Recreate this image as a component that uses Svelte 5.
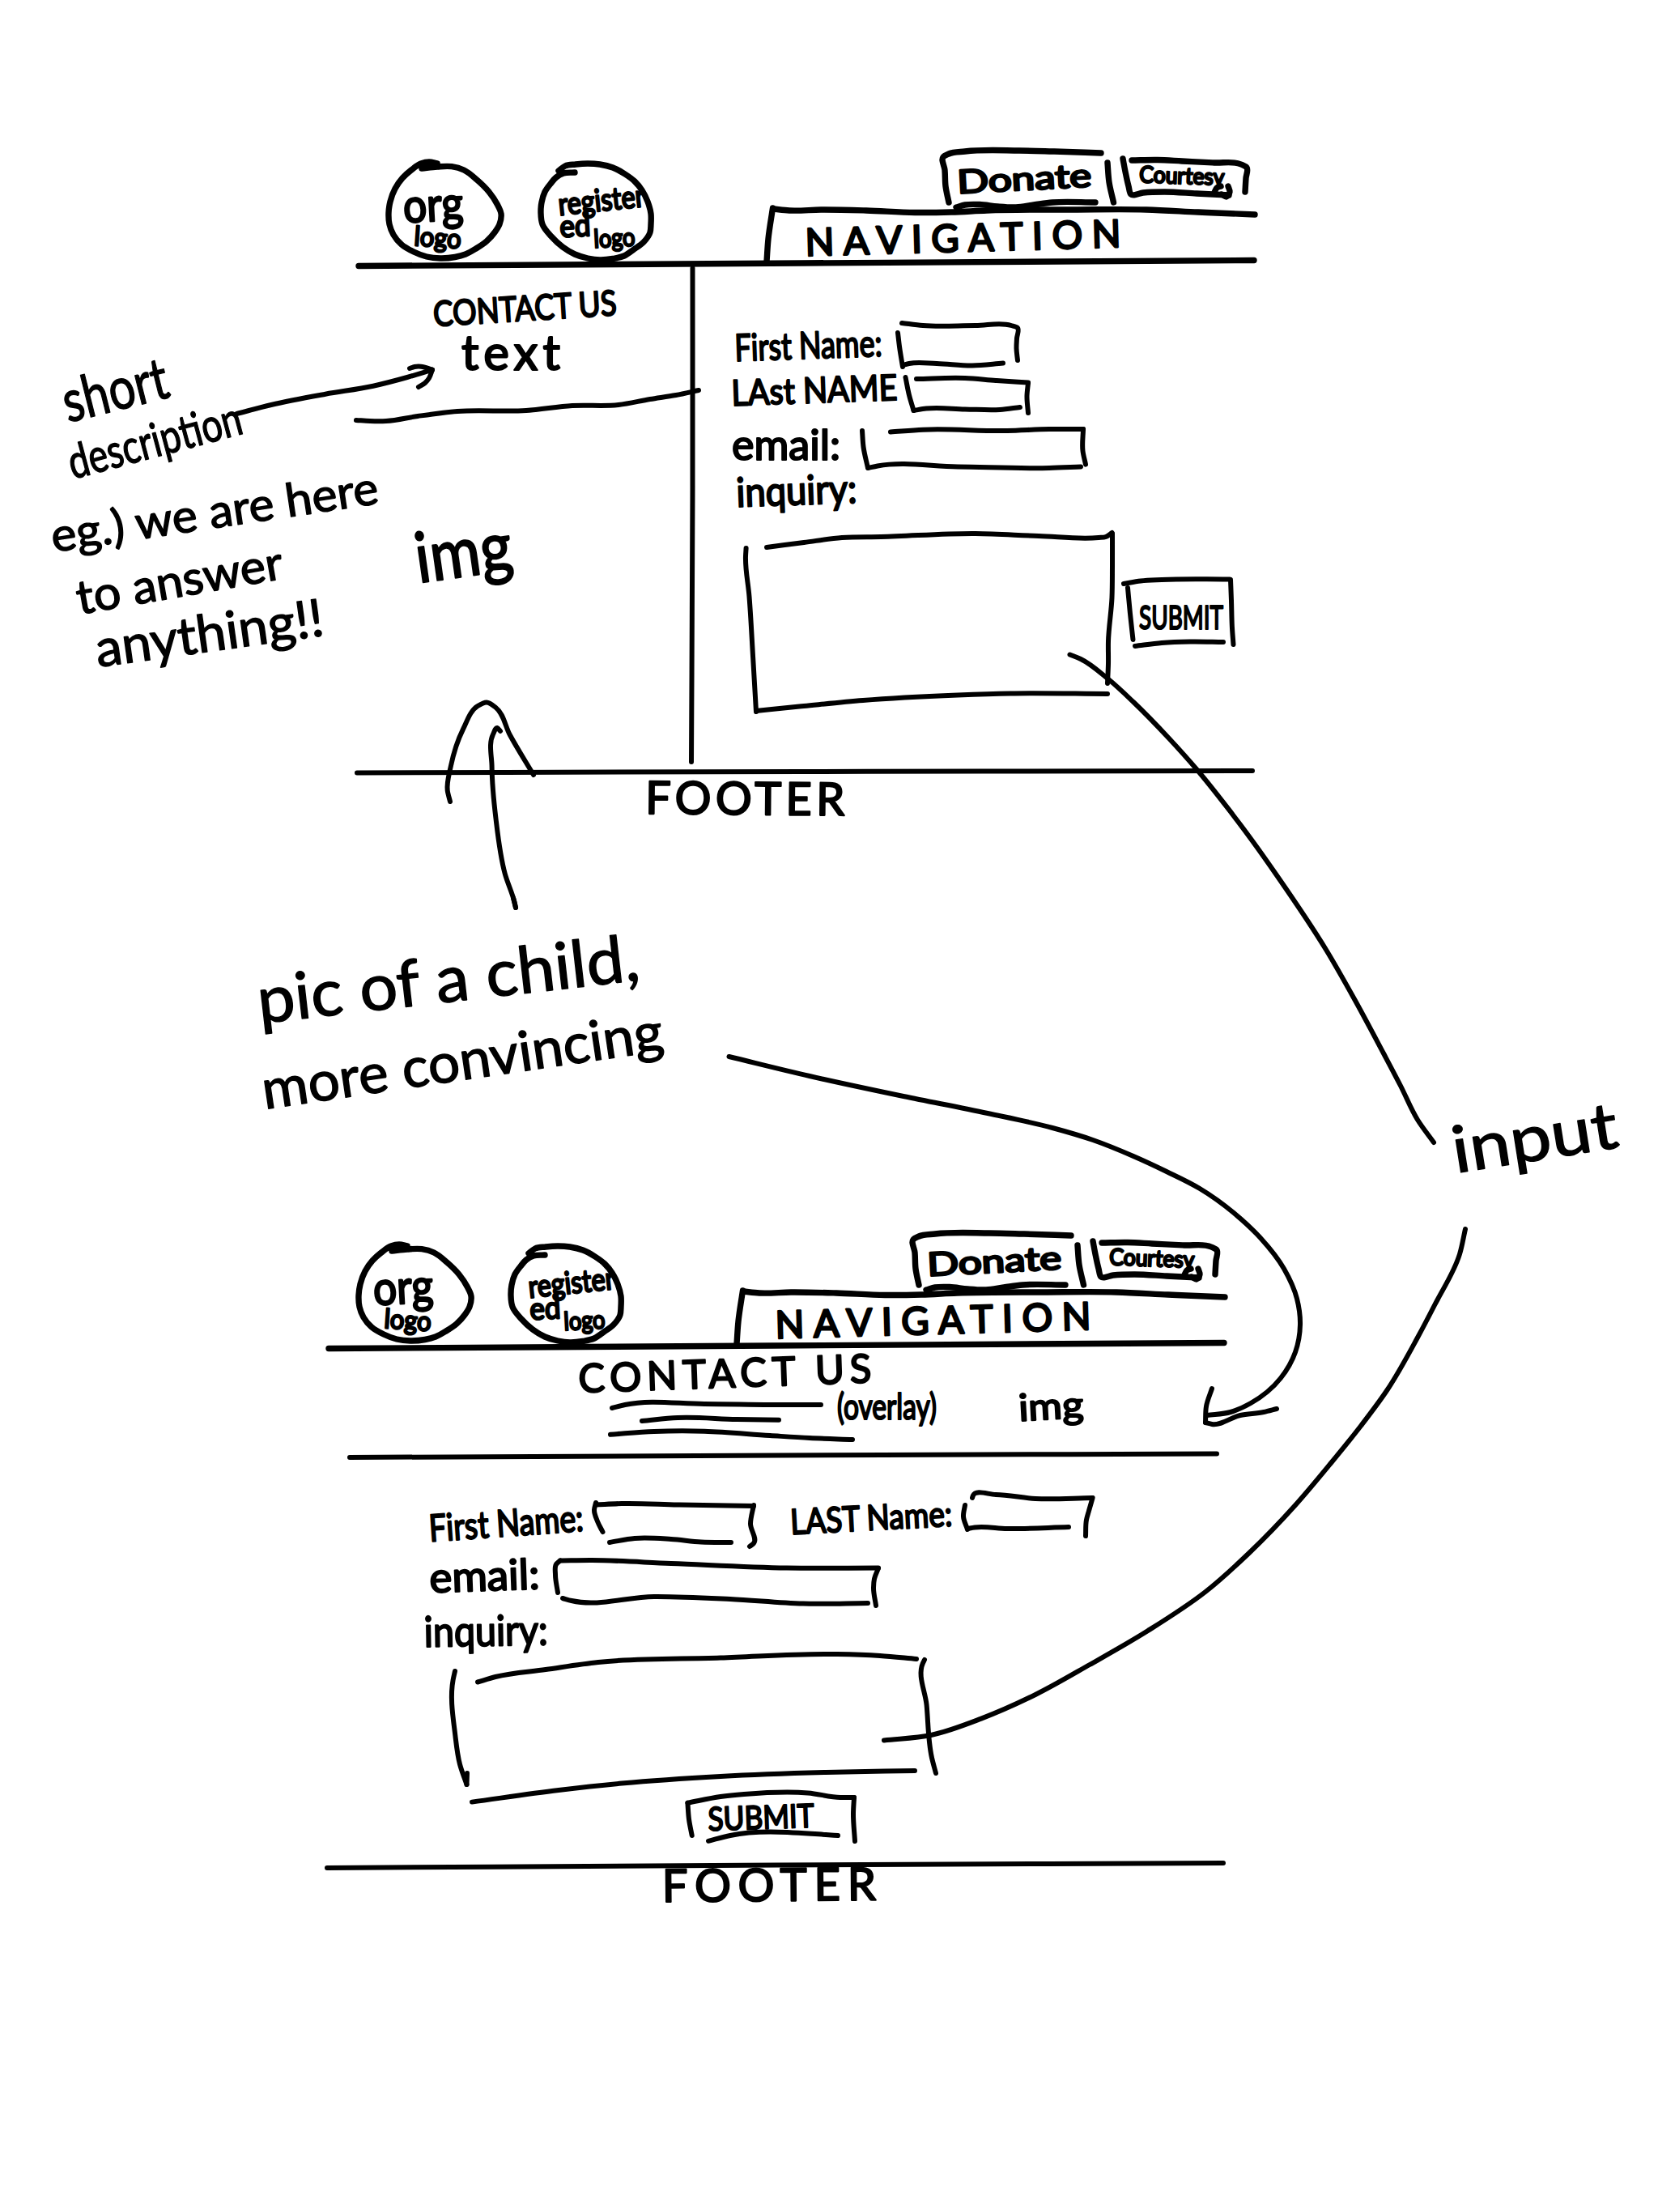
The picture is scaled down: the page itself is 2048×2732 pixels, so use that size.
<script>
  // Smooth pen stroke through a list of "x,y" points; tangents scale with
  // each segment's length so unevenly spaced points still bend softly.
  function pen(points) {
    const p = points.split(' ').map((s) => s.split(',').map(Number));
    const dist = (a, b) => Math.hypot(b[0] - a[0], b[1] - a[1]) || 1;
    const last = p.length - 1;
    const dir = p.map((b, i) => {
      const a = p[i - 1];
      const c = p[i + 1];
      if (!a) return [(c[0] - b[0]) / dist(b, c), (c[1] - b[1]) / dist(b, c)];
      if (i === last) return [(b[0] - a[0]) / dist(a, b), (b[1] - a[1]) / dist(a, b)];
      const l = dist(a, b);
      const r = dist(b, c);
      const x = ((b[0] - a[0]) / l) * r + ((c[0] - b[0]) / r) * l;
      const y = ((b[1] - a[1]) / l) * r + ((c[1] - b[1]) / r) * l;
      return [x / (l + r), y / (l + r)];
    });
    let d = `M${p[0][0]} ${p[0][1]}`;
    for (let i = 0; i < last; i++) {
      const b = p[i];
      const c = p[i + 1];
      const k = dist(b, c) / 3;
      d += `C${b[0] + dir[i][0] * k} ${b[1] + dir[i][1] * k} ${c[0] - dir[i + 1][0] * k} ${c[1] - dir[i + 1][1] * k} ${c[0]} ${c[1]}`;
    }
    return d;
  }
  const word = (t, x, y, w, size, rot = 0) => ({ t, x, y, w, size, rot, adjust: 'spacingAndGlyphs' });
  // Same as word(), but reaches its width by letter spacing alone.
  const spaced = (t, x, y, w, size, rot = 0) => ({ t, x, y, w, size, rot, adjust: 'spacing' });

  const orgLogo = [
    '521,208 540,206 558,205.7 573,210 589,222 604,237 614,252 619,264 617,277 611,287 601,298 588,307 575,314 562,317.5 544,319 527,317 511,311 496,302 486,290 481,277 480,263 482,249 488,233 497,220 508,210 520,202 530,200 540,202',
    '524,206 532,203 540,204'
  ];
  const regLogo = [
    '690,211 698,205 711,203 726,202 741,203 757,207 772,215 784,224 793,235 800,249 804,264 804,277 803,287 795,299 783,308 771,316 757,319.5 741,321 726,319 710,314 695,305 681,292 670,277 668,263 669,250 673,237 680,227 687,219 696,214 710,213'
  ];
</script>

{#snippet sketch(box, strokes, words = [], kind = '')}
  {@const b = box.split(' ')}
  <svg class="sketch {kind}" viewBox={box} width={b[2]} height={b[3]}>
    {#each strokes as s}<path d={pen(s)} />{/each}
    {#each words as w}
      <text x={w.x} y={w.y} textLength={w.w} lengthAdjust={w.adjust} font-size={w.size} transform="rotate({w.rot} {w.x} {w.y})">{w.t}</text>
    {/each}
  </svg>
{/snippet}

{#snippet siteHeader()}
  <header>
    <div class="bar">
      {@render sketch('474 180 150 140', orgLogo, [word('org', 499, 275, 74, 58, -3), word('logo', 511, 303, 58, 33, 4)], 'bold')}
      {@render sketch('660 180 150 140', regLogo, [word('register', 691, 266, 107, 38, -6), word('ed', 692, 293, 38, 38, -3), word('logo', 734, 306, 51, 31, -3)], 'bold')}
      <div class="tools">
        <div class="actions">
          {@render sketch('1160 180 220 72', ['1172,250 1168,230 1167,210 1165,194 1172,190 1192,187 1259,186 1300,187 1360,189', '1368,201 1370,225 1375.5,250', '1181,256 1192,253 1210,252.5 1232,255 1255,256 1277,253 1300,250 1353,250'], [word('Donate', 1183, 239, 166, 40, -3)], 'bold')}
          {@render sketch('1380 180 172 72', ['1387,196 1390,212 1394,230 1397,240 1412,238 1438,237 1478,239 1518,241', '1398,198 1430,197.5 1460,199 1500,201 1533,203 1540,207 1539,220 1538,237', '1500,238 1503,232 1508,230', '1509,240 1515,243 1519,237 1517,230'], [word('Courtesy', 1407, 225, 105, 28, 2)], 'bold')}
        </div>
        <nav>
          {@render sketch('940 252 612 68', ['947,323 949,295 954.5,257', '955,258 975,260 1014,259 1070,260 1130,262.5 1175,262 1219,260 1326,259 1416,259 1480,262 1550,265'], [spaced('NAVIGATION', 995, 316, 390, 47, -1.6)], 'bold')}
        </nav>
      </div>
    </div>
    {@render sketch('438 320 1114 14', ['443,328.5 990,325 1549,321.5'], [], 'bold')}
  </header>
{/snippet}

<div class="page">
  <section class="frame split">
    {@render siteHeader()}
    <main>
      <aside>
        {@render sketch('438 334 412 80', [], [word('CONTACT US', 536, 403, 227, 43, -3.5)])}
        {@render sketch('438 414 412 60', [], [spaced('text', 570, 457, 122, 60)])}
        {@render sketch('438 474 412 56', ['440,519 457,520 477,520 516,514 565,508 650,507 707,501 764,500 803,493 835,488 863,482'])}
        {@render sketch('438 530 412 170', [], [word('img', 517, 720, 120, 86, -8)])}
      </aside>
      {@render sketch('850 334 12 610', ['855.5,331 855.5,600 854,941'])}
      <form>
        <div class="row">
          {@render sketch('900 392 200 66', [], [word('First Name:', 908, 446, 182, 46, -2)])}
          {@render sketch('1100 392 170 66', ['1114,399 1140,402 1205,402 1249,402 1257,405 1256,418 1255.5,430 1257,445', '1109,411 1111,428 1115,453', '1115,451 1123,449 1157,449 1201,451.5 1239,448.6'])}
        </div>
        <div class="row">
          {@render sketch('900 458 210 62', [], [word('LAst NAME', 904, 501, 205, 44, -2)])}
          {@render sketch('1110 458 170 62', ['1118.5,466 1123,488 1128.5,507', '1128.5,507 1144,504.6 1192,505.4 1235,506 1260,503', '1132,468 1192,467 1230,470 1270,472.6', '1270,473 1268.5,489 1270,510'])}
        </div>
        <div class="row">
          {@render sketch('900 520 160 64', [], [word('email:', 904, 568, 134, 52)])}
          {@render sketch('1060 520 290 64', ['1065,532 1066.5,552 1072,578', '1072,578 1084,575.5 1183,576.5 1296,578 1335,576.5', '1100,533.6 1140,530.7 1244,532 1296,530 1338,530', '1338,530 1337.5,557 1341,573.6'])}
        </div>
        {@render sketch('900 584 200 66', [], [word('inquiry:', 910, 626, 149, 50, -2)])}
        <div class="row">
          {@render sketch('900 650 480 240', ['947,676 993,670 1040,664 1088,663 1205,659 1283,662 1357,664 1366,663 1373.5,658', '921.6,677 921,687 925.5,737 930,810 934,879', '1374,659 1374,700 1373.5,738 1369,792 1369,820 1368,844', '934,878 993,872 1066,865 1183,858.5 1248,856.4 1368,857'])}
          {@render sketch('1380 650 150 240', ['1388,721 1409,717.5 1435,716 1519,715.4', '1520,716 1521,742 1522,776 1523.5,796', '1393,726 1396,758 1399.5,790', '1402,798 1435,794 1470,792.5 1511,793'], [word('SUBMIT', 1407, 777, 104, 41)])}
        </div>
      </form>
    </main>
    <footer>
      {@render sketch('438 944 1114 76', ['441,954.5 990,953 1547,952'], [spaced('FOOTER', 797, 1005, 246, 56, 0.5)])}
    </footer>
  </section>

  <section class="frame stacked">
    {@render siteHeader()}
    <div class="hero">
      {@render sketch('700 1671 380 54', [], [spaced('CONTACT US', 715, 1720, 362, 49, -2)])}
      <div class="row">
        {@render sketch('700 1725 326 65', ['756,1739 772,1735 870,1734 951,1735 1014,1735', '793,1755 837,1751 910,1753 962,1753.7', '754,1771.7 808,1768 870,1767.7 951,1773 1000,1776 1053,1778'])}
        {@render sketch('1026 1725 144 65', [], [word('(overlay)', 1034, 1753, 123, 44)])}
        <div class="picture">
          {@render sketch('1250 1725 100 65', [], [word('img', 1259, 1755, 80, 46, -3)])}
        </div>
      </div>
      {@render sketch('400 1790 1114 20', ['432,1800 960,1797.5 1503,1795.5'])}
      {@render sketch('400 1810 1114 0', ['1193,1802.5 1206,1801.5 1226,1802', '1340,1804.4 1341,1804.6'], [], 'faint')}
    </div>
    <form>
      <div class="row">
        {@render sketch('520 1844 210 70', [], [word('First Name:', 531, 1904, 191, 46, -4)])}
        {@render sketch('730 1844 210 70', ['736,1856 734,1865 738,1879 744.5,1892', '736,1858.5 768,1857 837,1858.5 931,1860', '931,1859 927,1882 931,1906 926,1910', '753,1905 784,1900 829,1901 866,1904.5 903,1905'])}
        <div class="next">
          {@render sketch('970 1844 215 70', [], [word('LAST Name:', 977, 1895, 200, 43, -3)])}
        </div>
        {@render sketch('1185 1844 170 70', ['1192,1859 1190,1873 1195,1889', '1195,1888 1204,1886.5 1244,1888 1320,1886', '1201,1850 1202,1847 1230,1846 1279,1851 1349,1850', '1349.6,1850 1345,1866 1342,1877 1341,1897'])}
      </div>
      <div class="row">
        {@render sketch('520 1914 165 76', [], [word('email:', 531, 1967, 136, 52, -2)])}
        {@render sketch('685 1914 410 76', ['692,1927.4 687,1932 686,1945 689,1967', '692,1927.4 731,1927 829,1931 972,1936.6 1085,1936.6', '1085,1937 1080,1950 1079,1961 1082,1983', '695,1974 706,1977 808,1972 902,1975 992,1980.6 1072,1980'])}
      </div>
      {@render sketch('520 1990 165 46', [], [word('inquiry:', 524, 2034, 153, 52, -1)])}
      {@render sketch('520 2036 640 176', ['590,2077.5 612,2071 674,2062 739,2053 890,2047.6 1034,2043 1087,2045 1132,2049', '562,2064 559.6,2075 562.4,2144 568,2179 576.5,2204', '576.5,2204 577,2190', '1142,2050 1140,2054 1144.6,2106 1151,2171 1156,2190', '583,2225.6 690,2211 768,2202.6 890,2194 1020,2189 1130,2187'])}
      <div class="submit">
        {@render sketch('845 2212 215 68', ['849.4,2226.7 890,2219 919,2216 998,2214.5 1038,2220 1055,2220', '849.4,2226.7 851,2247 854.7,2267', '1055,2220 1054,2240 1056,2274', '875,2273.8 902,2267 1020,2266 1035,2267'], [word('SUBMIT', 875, 2261, 131, 40, -2)])}
      </div>
    </form>
    <footer>
      {@render sketch('400 2280 1114 80', ['404,2307 960,2303.5 1511,2301'], [spaced('FOOTER', 818, 2349, 264, 56, -0.5)])}
    </footer>
  </section>

  <!-- Free-hand notes and arrows laid over both frames -->
  <div class="notes">
    {@render sketch(
      '0 0 2048 2732',
      [
        '292.5,511 335,500 402,486.7 461,476.7 503,466 534,456.7',
        '506,455 512,453 520,452.7 534,456.7',
        '534,456.7 530,467 525,473 517,478',
        '556,990 552.7,976 556.7,947 572,900.7 590,872 601,867.5 612.5,874 630,908 659,957',
        '618,903 614,899 609,907 607.6,947 612.5,1011 623.7,1079 635.7,1115 637,1121',
        '634,1109 637,1121',
        '900.5,1305 1000,1329 1116,1354 1220,1375 1300,1393 1350,1408 1400,1428 1441,1447 1482,1468 1524,1498 1557,1529 1586,1567 1602,1604 1606,1636 1600,1670 1582,1702 1545,1733 1520,1744 1491,1748',
        '1497,1715 1490,1737 1489,1757',
        '1489,1757 1497,1759 1532,1748 1561,1744 1577,1740',
        '1321.5,808.5 1335,814 1369,838.8 1400,867 1444,912 1478,950 1517,998.7 1548,1040 1577,1081 1638,1173 1673,1234 1709,1301 1730,1341 1751,1383 1771,1411',
        '1810,1518 1803,1549 1772,1612 1751,1652 1714,1716 1681,1761 1644,1807 1600,1859 1543,1918 1489,1966 1418,2014 1346,2056 1279,2093 1212,2122.6 1150,2143 1092,2149.4'
      ],
      [
        word('short', 84, 522, 132, 72, -14),
        word('description', 90, 592, 220, 58, -15),
        word('eg.) we are here', 66, 682, 408, 57, -8.5),
        word('to answer', 98, 759, 258, 58, -10),
        word('anything!!', 121, 824, 284, 64, -8),
        word('pic of a child,', 321, 1264, 474, 80, -6.5),
        word('more convincing', 327, 1370, 500, 68, -8.4),
        word('input', 1798, 1449, 206, 80, -9)
      ]
    )}
  </div>
</div>

<style>
  :global(body) {
    background: #fff;
  }
  .page {
    position: relative;
    display: flex;
    flex-direction: column;
    width: 2048px;
    height: 2732px;
    background: #fff;
    overflow: hidden;
  }
  .frame {
    display: flex;
    flex-direction: column;
    width: 1114px;
  }
  .split {
    margin: 180px 0 0 438px;
  }
  .stacked {
    margin: 497px 0 0 400px;
  }
  .stacked header {
    margin-left: 1px;
  }
  .sketch {
    display: block;
    flex: none;
    overflow: visible;
    fill: none;
    stroke: #000;
    stroke-width: 6;
    stroke-linecap: round;
    stroke-linejoin: round;
  }
  .sketch text {
    font-family: Lato, 'Open Sans', sans-serif;
    fill: #000;
    stroke-width: 2.2;
  }
  .bold {
    stroke-width: 7.4;
  }
  .bold text {
    stroke-width: 2.6;
  }
  .notes .sketch text {
    stroke-width: 1.4;
  }
  .faint {
    stroke-width: 1.6;
  }
  header,
  aside,
  form,
  .tools {
    display: flex;
    flex-direction: column;
  }
  .bar {
    display: flex;
    gap: 36px;
    padding-left: 36px;
  }
  .tools {
    margin-left: 94px;
  }
  .actions {
    display: flex;
    justify-content: flex-end;
  }
  main {
    display: grid;
    grid-template-columns: 412px 12px 690px;
    height: 610px;
  }
  .row {
    display: flex;
  }
  .split form {
    padding: 58px 0 0 38px;
  }
  .hero > .sketch:first-child,
  .hero .row {
    margin-left: 300px;
  }
  .picture {
    margin-left: 80px;
  }
  .stacked form {
    padding: 34px 0 0 120px;
  }
  .next {
    margin-left: 30px;
  }
  .submit {
    margin-left: 325px;
  }
  .notes {
    position: absolute;
    inset: 0;
  }
</style>
